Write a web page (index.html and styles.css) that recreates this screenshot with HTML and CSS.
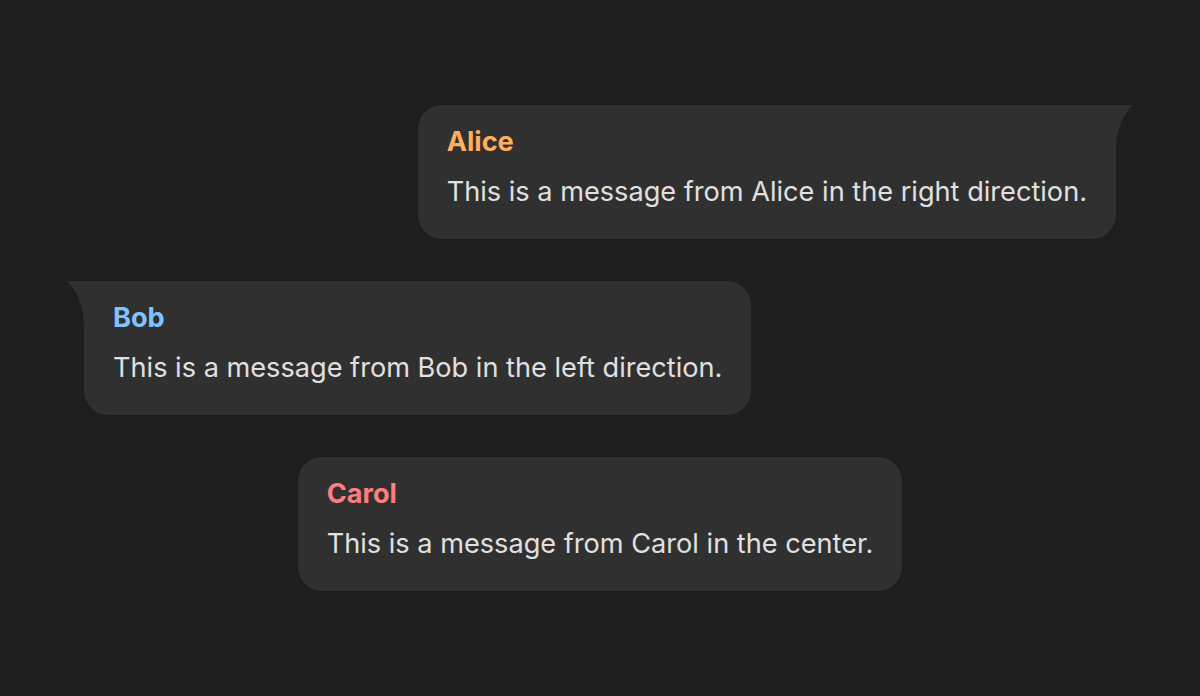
FILE: index.html
```html
<!DOCTYPE html>
<html>
<head>
<meta charset="utf-8">
<link rel="stylesheet" href="styles.css">
</head>
<body>
<main class="chat">
  <div class="msg right">
    <svg class="tail tail-right" width="17" height="45" viewBox="0 0 17 45"><path d="M0 0 H17 C10 8 0 20 0 45 Z" fill="#303030"/></svg>
    <div class="name alice">Alice</div>
    <div class="text">This is a message from Alice in the right direction.</div>
  </div>
  <div class="msg left">
    <svg class="tail tail-left" width="17" height="45" viewBox="0 0 17 45"><path d="M17 0 H0 C7 8 17 20 17 45 Z" fill="#303030"/></svg>
    <div class="name bob">Bob</div>
    <div class="text">This is a message from Bob in the left direction.</div>
  </div>
  <div class="msg center">
    <div class="name carol">Carol</div>
    <div class="text">This is a message from Carol in the center.</div>
  </div>
</main>
</body>
</html>
```
FILE: styles.css
```css
html, body {
  margin: 0;
  padding: 0;
  background: #1e1e1e;
}
body {
  font-family: Inter, "Noto Sans", sans-serif;
}
.chat {
  box-sizing: border-box;
  height: 696px;
  padding: 0 84px;
  display: flex;
  flex-direction: column;
  justify-content: center;
  gap: 42px;
}
.msg {
  position: relative;
  background: #303030;
  border-radius: 24px;
  padding: 19px 29px 29px 29px;
  width: fit-content;
  font-size: 27.15px;
}
.msg.right {
  align-self: flex-end;
  border-top-right-radius: 0;
}
.msg.left {
  align-self: flex-start;
  border-top-left-radius: 0;
}
.msg.center {
  align-self: center;
}
.tail {
  position: absolute;
  top: 0;
  display: block;
}
.tail-right { right: -17px; }
.tail-left { left: -17px; }
.name {
  font-weight: 700;
  line-height: 36px;
  margin-bottom: 14px;
}
.text {
  color: #e0e0e0;
  line-height: 36px;
}
.alice { color: #ffae5e; }
.bob { color: #7ec3ff; }
.carol { color: #ff7d7d; }
```
